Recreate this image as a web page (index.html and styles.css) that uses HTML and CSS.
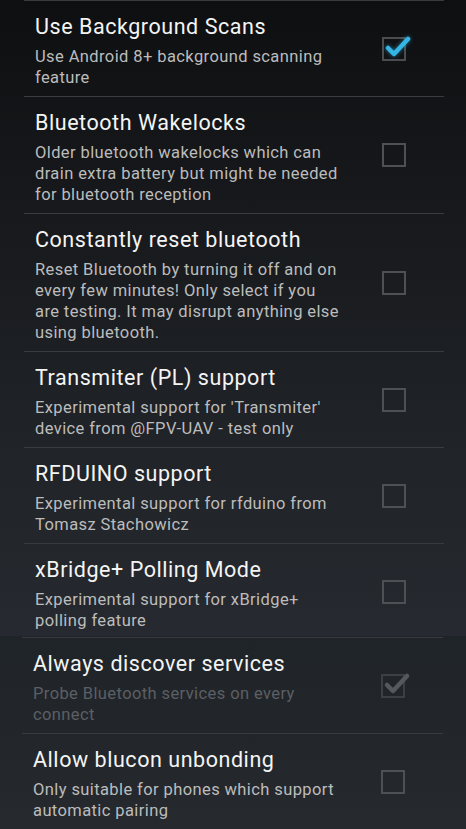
FILE: index.html
```html
<!DOCTYPE html>
<html>
<head>
<meta charset="utf-8">
<link rel="stylesheet" href="styles.css">
</head>
<body>
<div class="panel panel-top">
  <ul class="list">
    <li class="row">
      <div class="text">
        <div class="title">Use Background Scans</div>
        <div class="summary">Use Android 8+ background scanning feature</div>
      </div>
      <div class="cb-wrap"><span class="cb checked">
        <svg class="tick" viewBox="0 0 30 24" width="30" height="24"><path d="M4 9 L10 15 L24 0" fill="none" stroke="#33b5e5" stroke-width="4.5" stroke-linecap="round" stroke-linejoin="round"/></svg>
      </span></div>
    </li>
    <li class="row">
      <div class="text">
        <div class="title">Bluetooth Wakelocks</div>
        <div class="summary">Older bluetooth wakelocks which can drain extra battery but might be needed for bluetooth reception</div>
      </div>
      <div class="cb-wrap"><span class="cb"></span></div>
    </li>
    <li class="row">
      <div class="text">
        <div class="title">Constantly reset bluetooth</div>
        <div class="summary">Reset Bluetooth by turning it off and on every few minutes! Only select if you are testing. It may disrupt anything else using bluetooth.</div>
      </div>
      <div class="cb-wrap"><span class="cb"></span></div>
    </li>
    <li class="row">
      <div class="text">
        <div class="title">Transmiter (PL) support</div>
        <div class="summary">Experimental support for 'Transmiter' device from @FPV-UAV - test only</div>
      </div>
      <div class="cb-wrap"><span class="cb"></span></div>
    </li>
    <li class="row">
      <div class="text">
        <div class="title">RFDUINO support</div>
        <div class="summary">Experimental support for rfduino from Tomasz Stachowicz</div>
      </div>
      <div class="cb-wrap"><span class="cb"></span></div>
    </li>
    <li class="row">
      <div class="text">
        <div class="title">xBridge+ Polling Mode</div>
        <div class="summary">Experimental support for xBridge+ polling feature</div>
      </div>
      <div class="cb-wrap"><span class="cb"></span></div>
    </li>
  </ul>
</div>
<div class="panel panel-bottom">
  <ul class="list">
    <li class="row">
      <div class="text">
        <div class="title">Always discover services</div>
        <div class="summary disabled">Probe Bluetooth services on every connect</div>
      </div>
      <div class="cb-wrap"><span class="cb dim">
        <svg class="tick" viewBox="0 0 30 24" width="30" height="24"><path d="M4 9 L10 15 L24 0" fill="none" stroke="#55585c" stroke-width="4.5" stroke-linecap="round" stroke-linejoin="round"/></svg>
      </span></div>
    </li>
    <li class="row">
      <div class="text">
        <div class="title">Allow blucon unbonding</div>
        <div class="summary">Only suitable for phones which support automatic pairing</div>
      </div>
      <div class="cb-wrap"><span class="cb"></span></div>
    </li>
  </ul>
</div>
</body>
</html>
```

FILE: styles.css
```css
html, body {
  margin: 0;
  padding: 0;
  background: #24282d;
}
body {
  width: 466px;
  height: 829px;
  overflow: hidden;
  font-family: Roboto, "Noto Sans", sans-serif;
}
.panel {
  overflow: hidden;
}
.panel-top {
  height: 636px;
  background: linear-gradient(to bottom, #0e0f11 0%, #16181b 30%, #1f2226 65%, #262a30 100%);
}
.panel-bottom {
  height: 193px;
  padding-top: 1px;
  box-sizing: border-box;
  background: linear-gradient(to bottom, #1f2428 0%, #23272c 60%, #262a2f 100%);
}
.list {
  list-style: none;
  margin: 0 22px 0 24px;
  padding: 0;
}
.panel-bottom .list {
  margin: 0 23px 0 22px;
}
.row {
  display: flex;
  align-items: center;
  border-top: 1px solid #393b40;
}
.text {
  flex: 0 0 307px;
  padding: 12px 4px 8px 11px;
}
.title {
  font-size: 21.5px;
  line-height: 28px;
  letter-spacing: 0.55px;
  color: #f4f4f4;
}
.summary {
  margin-top: 5px;
  font-size: 16.5px;
  line-height: 21px;
  letter-spacing: 0.4px;
  color: #bcbcbc;
}
.summary.disabled {
  color: #5c5f64;
}
.cb-wrap {
  flex: 1;
  display: flex;
  justify-content: flex-end;
  padding-right: 38px;
}
.cb {
  position: relative;
  width: 20px;
  height: 20px;
  border: 2px solid #4e5054;
  display: block;
}
.cb.checked {
  border-color: #4a4c50;
}
.cb.dim {
  border-color: #3c3f44;
}
.tick {
  position: absolute;
  left: 0;
  top: 0;
  overflow: visible;
}
.cb.checked .tick {
  filter: drop-shadow(0 0 2px rgba(51, 181, 229, 0.6));
}
```
